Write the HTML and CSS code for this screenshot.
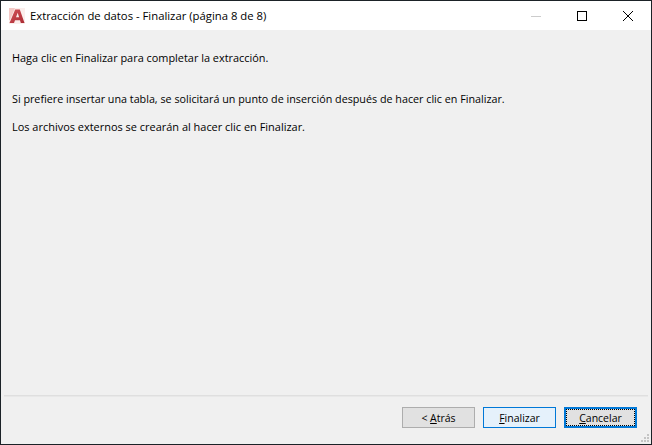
FILE: index.html
```html
<!DOCTYPE html>
<html lang="es">
<head>
<meta charset="utf-8">
<title>Extracción de datos - Finalizar (página 8 de 8)</title>
<link rel="stylesheet" href="styles.css">
</head>
<body>
<div class="window">
  <header class="titlebar">
    <svg class="app-icon" width="16" height="16" viewBox="0 0 16 16">
      <defs>
        <linearGradient id="red" x1="0" y1="0" x2="1" y2="1">
          <stop offset="0" stop-color="#d4545a"/>
          <stop offset="1" stop-color="#a92a32"/>
        </linearGradient>
      </defs>
      <rect width="16" height="16" fill="#fbeeec"/>
      <path d="M0 0h6L1 12H0z" fill="#f4c9c6"/>
      <path d="M.5 15 6.200 1.500h4.600L15.500 15h-3.700l-.8-2.800H6L5 15zM7 9.300h3.100L8.700 4.800z" fill="url(#red)"/>
    </svg>
    <span class="title">Extracción de datos - Finalizar (página 8 de 8)</span>
    <div class="controls">
      <span class="ctl"><svg width="10" height="10" viewBox="0 0 10 10"><path d="M0 5.500h10" stroke="#ccc" fill="none"/></svg></span>
      <span class="ctl"><svg width="10" height="10" viewBox="0 0 10 10"><rect x=".5" y=".5" width="9" height="9" stroke="#000" fill="none"/></svg></span>
      <span class="ctl"><svg width="10" height="10" viewBox="0 0 10 10"><path d="M0 0l10 10M10 0 0 10" stroke="#000" fill="none"/></svg></span>
    </div>
  </header>
  <main class="content">
    <p class="first">Haga clic en Finalizar para completar la extracción.</p>
    <p class="second">Si prefiere insertar una tabla, se solicitará un punto de inserción después de hacer clic en Finalizar.</p>
    <p class="third">Los archivos externos se crearán al hacer clic en Finalizar.</p>
  </main>
  <footer class="footer">
    <div class="separator"></div>
    <div class="buttons">
      <button class="btn"><span class="label">&lt; <u>A</u>trás</span></button>
      <button class="btn btn-hover"><span class="label"><u>F</u>inalizar</span></button>
      <button class="btn btn-focus"><span class="dots"><span class="label"><u>C</u>ancelar</span></span></button>
    </div>
  </footer>
  <svg class="grip" width="10" height="10" viewBox="0 0 10 10">
    <path d="M7 1h2v2H7zM4 4h2v2H4zM7 4h2v2H7zM1 7h2v2H1zM4 7h2v2H4zM7 7h2v2H7z" fill="#c4c4c4"/>
  </svg>
</div>
</body>
</html>
```
FILE: styles.css
```css
* { box-sizing: border-box; }
html, body { margin: 0; height: 100%; }
body { font-family: "Open Sans", "Noto Sans", sans-serif; font-size: 10.76px; color: #000; }
.window {
  position: relative;
  width: 652px;
  height: 445px;
  display: flex;
  flex-direction: column;
  background: #f0f0f0;
  border: 1px solid #1b2227;
}
.titlebar {
  height: 29px;
  display: flex;
  align-items: center;
  background: #fff;
  padding-left: 8px;
  flex: none;
}
.app-icon { flex: none; margin-right: 5px; }
.title { font-size: 11.3px; white-space: nowrap; }
.controls { margin-left: auto; display: flex; }
.ctl { width: 46px; height: 29px; display: flex; align-items: center; justify-content: center; }
.content { flex: 1; padding-left: 11px; }
.content p { margin: 0; line-height: 16px; white-space: nowrap; }
.first { padding-top: 20px; font-size: 10.92px; }
.second { padding-top: 25px; }
.third { padding-top: 12px; font-size: 10.96px; }
.footer { flex: none; }
.separator { height: 2px; margin: 0 3px; background: #dfdfdf; border-bottom: 1px solid #e8e8e8; }
.buttons { display: flex; justify-content: flex-end; gap: 8px; padding: 10px 14px 16px 0; }
.btn {
  width: 73px;
  height: 21px;
  padding: 0;
  font: inherit;
  font-size: 10.5px;
  color: #000;
  background: #e1e1e1;
  border: 1px solid #adadad;
  display: flex;
  align-items: center;
  justify-content: center;
}
.label { white-space: pre; }
.btn-hover { background: #e5f1fb; border-color: #0078d7; }
.btn-focus { border: 2px solid #0078d7; padding: 0; }
.dots { flex: 1; align-self: stretch; display: flex; align-items: center; justify-content: center; border: 1px dotted #000; }
.grip { position: absolute; right: 1px; bottom: 1px; }
```
